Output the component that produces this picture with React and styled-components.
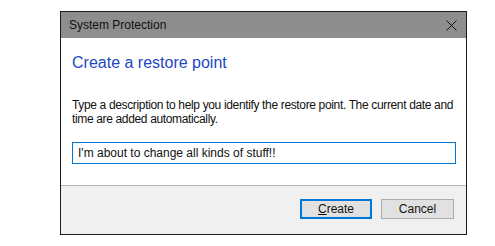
import React from "react";
import styled, { createGlobalStyle } from "styled-components";

const Global = createGlobalStyle`
  body {
    margin: 0;
    background: #fff;
    font-family: "Liberation Sans", Arial, sans-serif;
  }
`;

const Page = styled.div`
  padding: 11px 0 0 60px;
`;

const Dialog = styled.div`
  width: 405px;
  border: 1px solid #1c1c1c;
  background: #fff;
`;

const TitleBar = styled.div`
  height: 26px;
  background: #8e8e8e;
  display: flex;
  align-items: center;
  justify-content: space-between;
  padding: 0 9px 0 8px;
  font-size: 12px;
  color: #111;
`;

const Body = styled.div`
  padding: 15px 9px 21px 11px;
  border-bottom: 1px solid #b4b4b4;
`;

const Heading = styled.h1`
  margin: 0;
  font-size: 16px;
  line-height: 20px;
  font-weight: normal;
  color: #1d48c2;
`;

const Description = styled.p`
  margin: 25px 0 16px;
  font-size: 12px;
  line-height: 14px;
  letter-spacing: -0.35px;
  white-space: nowrap;
  color: #111;
`;

const Input = styled.input`
  display: block;
  box-sizing: border-box;
  width: 384px;
  height: 22px;
  border: 1px solid #0078d7;
  padding: 0 5px;
  font-family: inherit;
  font-size: 12px;
  color: #111;
  outline: none;
`;

const Footer = styled.div`
  background: #f0f0f0;
  display: flex;
  justify-content: flex-end;
  gap: 9px;
  padding: 13px 12px 15px;
`;

const Button = styled.button`
  box-sizing: border-box;
  width: ${p => p.$w}px;
  height: 20px;
  background: #e1e1e1;
  border: ${p => (p.$primary ? "2px solid #0078d7" : "1px solid #adadad")};
  font-family: inherit;
  font-size: 12px;
  color: #111;
  padding: 0;
`;

const Close = () => (
  <svg width="11" height="11" viewBox="0 0 11 11">
    <path d="M0.5 0.5 L10.5 10.5 M10.5 0.5 L0.5 10.5" stroke="#111" strokeWidth="1" />
  </svg>
);

export default function App() {
  return (
    <Page>
      <Global />
      <Dialog>
        <TitleBar>
          <span>System Protection</span>
          <Close />
        </TitleBar>
        <Body>
          <Heading>Create a restore point</Heading>
          <Description>
            Type a description to help you identify the restore point. The current date and
            <br />
            time are added automatically.
          </Description>
          <Input defaultValue="I'm about to change all kinds of stuff!!" />
        </Body>
        <Footer>
          <Button $primary $w={72}>
            <u>C</u>reate
          </Button>
          <Button $w={73}>Cancel</Button>
        </Footer>
      </Dialog>
    </Page>
  );
}
